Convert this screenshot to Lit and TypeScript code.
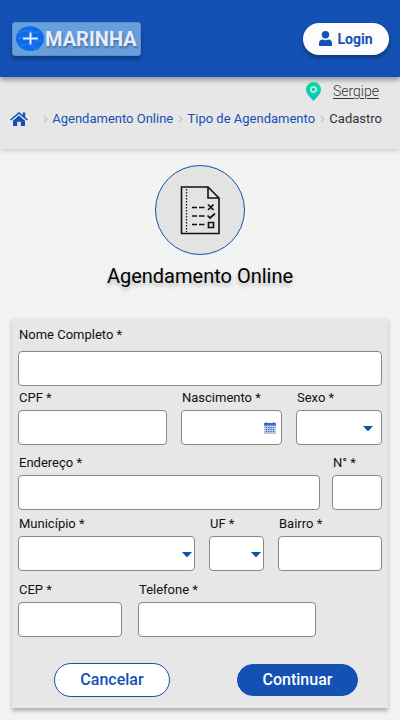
import { LitElement, html, css, svg } from "lit";
import { customElement } from "lit/decorators.js";

const chevron = html`<svg class="chev" viewBox="0 0 5 8" aria-hidden="true"><path d="M.8 .8 4 4 .8 7.2" fill="none" stroke="#c8c8c8" stroke-width="1.5"/></svg>`;
const caret = html`<svg class="caret" viewBox="0 0 10 5" aria-hidden="true"><path d="M0 0H10L6 4.6Q5 5.4 4 4.6Z" fill="#1351b4"/></svg>`;

@customElement("app-root")
export class AppRoot extends LitElement {
  static styles = css`
    :host {
      display: block;
      min-height: 100vh;
      background: #f3f3f3;
      color: #111;
      font-family: Roboto, "Liberation Sans", sans-serif;
      font-size: 14px;
      line-height: 16px;
    }
    * { box-sizing: border-box; }
    svg { display: block; flex: none; }
    header {
      position: relative;
      display: flex;
      align-items: center;
      justify-content: space-between;
      height: 77px;
      padding: 0 11px 0 12px;
      background: #1351b4;
      box-shadow: 0 3px 5px rgba(0, 0, 0, 0.35);
    }
    .logo {
      display: flex;
      align-items: center;
      gap: 1px;
      height: 34px;
      padding: 0 3px 0 3px;
      border-radius: 3px;
      background: #679fda;
      border: 1px solid #5890d0;
      box-shadow: 0 3px 4px rgba(0, 0, 0, 0.3);
      color: #e4edff;
      text-decoration: none;
      font: bold 20px/32px Roboto, sans-serif;
      text-shadow: 1px 2px 2px rgba(0, 0, 0, 0.3);
    }
    .logo svg { width: 28px; height: 25px; }
    .login {
      display: flex;
      align-items: center;
      justify-content: center;
      gap: 5px;
      width: 86px;
      height: 32px;
      padding: 0;
      border: 0;
      border-radius: 16px;
      background: #fcfcfc;
      color: #1351b4;
      font: bold 14px/16px Roboto, sans-serif;
      box-shadow: 0 3px 4px rgba(0, 0, 0, 0.3);
    }
    .login svg { width: 13px; height: 15px; }
    .sub {
      height: 72px;
      padding: 4px 18px 0 10px;
      background: #e7e7e7;
      box-shadow: 0 2px 4px rgba(0, 0, 0, 0.15);
    }
    .place {
      display: flex;
      justify-content: flex-end;
      align-items: center;
      gap: 12px;
      height: 20px;
      padding-right: 3px;
    }
    .place svg { width: 15px; height: 19px; }
    .place a { color: #333; font-weight: 300; text-underline-offset: 2px; }
    .crumbs {
      display: flex;
      align-items: center;
      justify-content: space-between;
      height: 36px;
      font-size: 13px;
      color: #333;
      white-space: nowrap;
    }
    .crumbs a { color: #1351b4; text-decoration: none; }
    .home { margin-right: 10px; }
    .home svg { width: 18px; height: 14px; }
    .chev { width: 5px; height: 8px; }
    .hero {
      display: flex;
      flex-direction: column;
      align-items: center;
      gap: 9px;
      padding: 16px 0 30px;
    }
    .disc {
      display: grid;
      place-items: center;
      width: 90px;
      height: 90px;
      border: 1px solid #1351b4;
      border-radius: 50%;
      background: #e3e3e3;
    }
    .disc svg { width: 40px; height: 50px; }
    h1 {
      margin: 0;
      color: #000;
      font-size: 20px;
      line-height: 24px;
      font-weight: 400;
      text-shadow: 0 3px 4px rgba(0, 0, 0, 0.25);
    }
    form {
      margin: 0 12px 12px;
      padding: 9px 6px 11px;
      background: #e7e7e7;
      box-shadow: 0 3px 4px rgba(0, 0, 0, 0.28);
    }
    .row { display: grid; }
    .name { grid-template-columns: 1fr; }
    .name .field { gap: 8px; }
    .ident { grid-template-columns: 149fr 101fr 86fr; gap: 14px; margin-top: 4px; }
    .street { grid-template-columns: 302fr 50fr; gap: 12px; margin-top: 10px; }
    .city { grid-template-columns: 177fr 55fr 104fr; gap: 14px; margin-top: 6px; }
    .phone { grid-template-columns: 104fr 178fr 50fr; gap: 16px; margin-top: 11px; }
    .field { display: flex; flex-direction: column; gap: 4px; min-width: 0; }
    label { padding-left: 1px; font-size: 13px; white-space: nowrap; }
    .box { position: relative; }
    input, select {
      display: block;
      width: 100%;
      height: 35px;
      margin: 0;
      padding: 0 6px;
      border: 1px solid #888;
      border-radius: 4px;
      background: #fff;
      color: #111;
      font: inherit;
      appearance: none;
    }
    .caret { position: absolute; right: 3px; top: 16px; width: 10px; height: 5px; pointer-events: none; }
    .ident .caret { right: 9px; }
    .cal {
      position: absolute;
      right: 6px;
      top: 12px;
      padding: 0;
      border: 0;
      background: none;
    }
    .cal svg { width: 12px; height: 12px; }
    .actions {
      display: flex;
      align-items: center;
      justify-content: space-between;
      margin-top: 26px;
      padding: 0 24px 0 36px;
    }
    .btn {
      width: 116px;
      height: 34px;
      padding: 0;
      border: 1px solid #1351b4;
      border-radius: 17px;
      background: #fff;
      color: #1351b4;
      font: 500 16px/20px Roboto, sans-serif;
    }
    .primary { width: 121px; height: 32px; background: #1351b4; color: #fff; }
  `;

  private text(id: string, label: string) {
    return html`<div class="field"><label for=${id}>${label} *</label><input id=${id} type="text" /></div>`;
  }

  private choice(id: string, label: string) {
    return html`<div class="field"><label for=${id}>${label} *</label>
      <div class="box"><select id=${id}><option></option></select>${caret}</div></div>`;
  }

  render() {
    return html`
      <header>
        <a class="logo" href="#">
          <svg viewBox="0 0 28 25" aria-hidden="true">
            <ellipse cx="14" cy="12.5" rx="14" ry="12.3" fill="#0c6be8"/>
            <path d="M3 7Q9 3 13 5T24 6M2 13Q5 10 9 14M18 17Q22 13 26 15M5 20Q12 16 17 21T23 20" fill="none" stroke="#1f7cee" stroke-width="1.6"/>
            <path d="M14.500 6.500V18.500M7 12.500H22" stroke="#e4f0ff" stroke-width="2"/>
          </svg>
          <span>MARINHA</span>
        </a>
        <button class="login" type="button">
          <svg viewBox="0 0 13 15" aria-hidden="true"><circle cx="6.500" cy="3.700" r="3.700" fill="#1351b4"/><path d="M0 15V12.500Q0 8.800 3.800 8.600Q6.500 9.700 9.200 8.600Q13 8.800 13 12.500V15Z" fill="#1351b4"/></svg>
          Login
        </button>
      </header>
      <div class="sub">
        <div class="place">
          <svg viewBox="0 0 15 19" aria-hidden="true">
            <defs><linearGradient id="pin" x1="0" y1="0" x2="0" y2="1"><stop offset="0" stop-color="#0be09a"/><stop offset="1" stop-color="#08bfc9"/></linearGradient></defs>
            <path d="M7.500 0A7.500 7.500 0 0 1 15 7.500C15 12 10.500 15.500 7.500 19C4.500 15.500 0 12 0 7.500A7.500 7.500 0 0 1 7.500 0Z" fill="url(#pin)"/>
            <circle cx="7.500" cy="7.500" r="2.600" fill="none" stroke="#dffcf4" stroke-width="1.300"/>
          </svg>
          <a href="#">Sergipe</a>
        </div>
        <nav class="crumbs">
          <a class="home" href="#" aria-label="Início">
            <svg viewBox="0 0 18 14" aria-hidden="true"><path d="M9 3.600 15 8.700V13.400Q15 14 14.400 14H10.800V9.800H7.200V14H3.600Q3 14 3 13.400V8.700Z" fill="#1351b4"/><path d="M.6 8 9 1 17.400 8" fill="none" stroke="#1351b4" stroke-width="1.600"/><path d="M12.800 .5H15.200V6L12.800 4Z" fill="#1351b4"/></svg>
          </a>
          ${chevron}<a href="#">Agendamento Online</a>
          ${chevron}<a href="#">Tipo de Agendamento</a>
          ${chevron}<span>Cadastro</span>
        </nav>
      </div>
      <main>
        <div class="hero">
          <div class="disc">
            <svg viewBox="0 0 40 50" fill="none" stroke="#111" aria-hidden="true">
              <path d="M1.500 2H28L39 13V48.500H1.500Z" stroke-width="1.600"/>
              <path d="M28 2V13H39" stroke-width="1.600"/>
              <path d="M6.500 4V47" stroke-width="1.200" stroke-dasharray="1.500 1.500"/>
              <path d="M12 22.500H17M19 22.500H24.500M12 31H17M19 31H24.500M12 39.500H17M19 39.500H24.500" stroke-width="1.700"/>
              <path d="M28 19.500 33.500 25M33.500 19.500 28 25M27.500 30.500 30 33 35 28.500" stroke-width="1.700"/>
              <path d="M28.500 37.500H33.500V42.500H28.500Z" stroke-width="1.700"/>
            </svg>
          </div>
          <h1>Agendamento Online</h1>
        </div>
        <form>
          <div class="row name">${this.text("nome", "Nome Completo")}</div>
          <div class="row ident">
            ${this.text("cpf", "CPF")}
            <div class="field">
              <label for="nasc">Nascimento *</label>
              <div class="box">
                <input id="nasc" type="text" />
                <button class="cal" type="button" aria-label="Abrir calendário">
                  <svg viewBox="0 0 12 12"><path d="M0 1H12V12H0Z" fill="#b7c9e8"/><path d="M0 1H2V0H3V1H9V0H10V1H12V3.500H0Z" fill="#3a6dc0"/>
                  ${[5, 7, 9].map((y) => svg`<path d=${`M2 ${y}H10`} transform="translate(0 .5)" stroke="#1351b4" stroke-dasharray="1 1.300"/>`)}</svg>
                </button>
              </div>
            </div>
            ${this.choice("sexo", "Sexo")}
          </div>
          <div class="row street">${this.text("endereco", "Endereço")}${this.text("numero", "N°")}</div>
          <div class="row city">${this.choice("municipio", "Município")}${this.choice("uf", "UF")}${this.text("bairro", "Bairro")}</div>
          <div class="row phone">${this.text("cep", "CEP")}${this.text("telefone", "Telefone")}</div>
          <div class="actions">
            <button class="btn" type="button">Cancelar</button>
            <button class="btn primary" type="submit">Continuar</button>
          </div>
        </form>
      </main>
    `;
  }
}
